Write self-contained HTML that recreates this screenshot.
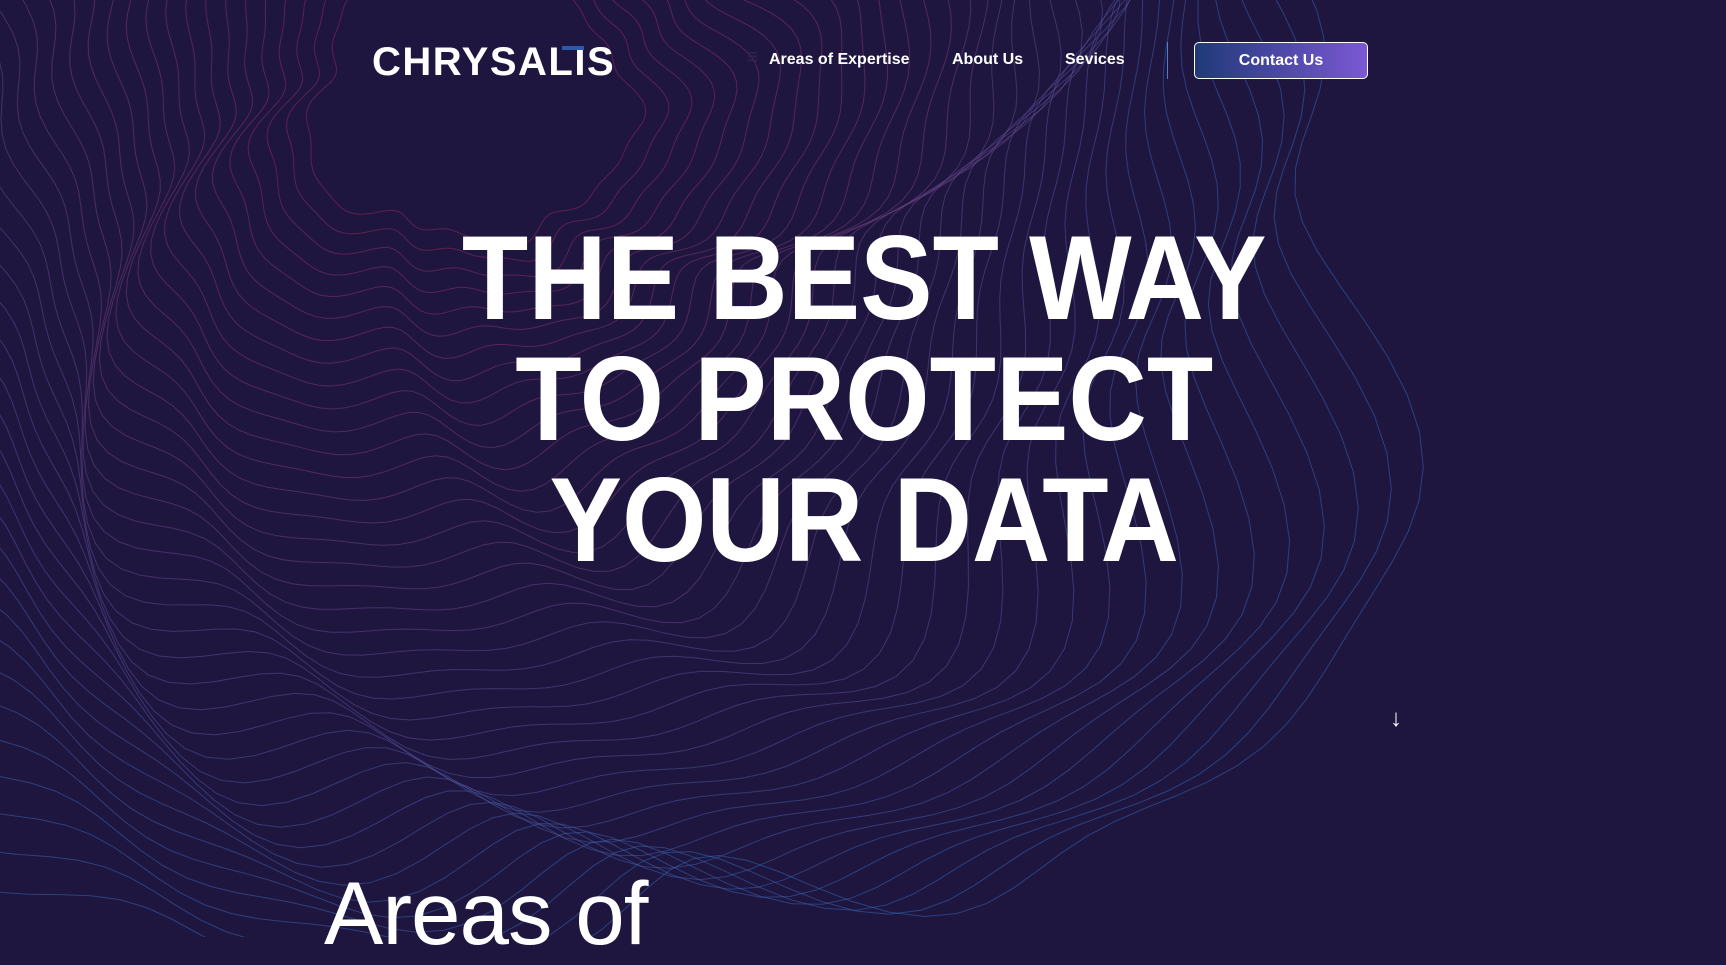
<!DOCTYPE html>
<html><head><meta charset="utf-8">
<style>
html,body{margin:0;padding:0;width:1726px;height:937px;overflow:hidden;background:#1f1640;font-family:"Liberation Sans",sans-serif;color:#fff}
svg#bg{position:absolute;left:0;top:0}
.logo{position:absolute;left:372px;top:40px;font-size:40px;font-weight:bold;letter-spacing:1.5px;color:#fff}
.logo .bar{position:absolute;left:190px;top:6px;width:22px;height:4px;background:#2a5aa8}
.nav{position:absolute;top:51px;font-size:16px;font-weight:bold;white-space:nowrap}
.div{position:absolute;left:1167px;top:42px;width:1px;height:37px;background:#4a7fd0}
.btn{position:absolute;left:1194px;top:42px;width:172px;height:35px;border:1.5px solid #fff;border-radius:5px;background:linear-gradient(90deg,#1f3a78,#7b58d4);font-size:16px;font-weight:bold;text-align:center;line-height:35px}
h1{position:absolute;left:0;width:1726px;top:218px;margin:0;text-align:center;font-size:120px;line-height:121px;font-weight:bold;letter-spacing:0;transform:scaleX(0.905);transform-origin:876px 0}
.arrow{position:absolute;left:1390px;top:705px;font-size:24px}
.areas{position:absolute;left:324px;top:862px;font-size:89px;font-weight:normal;letter-spacing:-1px}
</style></head><body>
<svg id="bg" width="1726" height="937" viewBox="0 0 1726 937"></svg>
<div class="logo">CHRYSALIS<span class="bar"></span></div>
<div class="nav" style="left:747px;top:50px;font-size:12px;color:#2c2450">☰</div>
<div class="nav" style="left:769px">Areas of Expertise</div>
<div class="nav" style="left:952px">About Us</div>
<div class="nav" style="left:1065px">Sevices</div>
<div class="div"></div>
<div class="btn">Contact Us</div>
<h1>THE BEST WAY<br>TO PROTECT<br>YOUR DATA</h1>
<div class="arrow">↓</div>
<div class="areas">Areas of</div>
<script>
(function(){
var s=document.getElementById('bg'),h='';
var cx=470,cy=90;
function lerp(a,b,t){return Math.round(a+(b-a)*t)}
for(var i=0;i<40;i++){
 var r=120+i*15,t=i/39;
 var c1=[160,40,95],c2=[50,110,190];
 var col='rgb('+lerp(c1[0],c2[0],t)+','+lerp(c1[1],c2[1],t)+','+lerp(c1[2],c2[2],t)+')';
 var d='';
 for(var k=0;k<=200;k++){
  var a=k/200*Math.PI*2;
  var n=1+0.08*Math.sin(3*a+i*0.15)+0.06*Math.sin(5*a+1+i*0.1)+0.03*Math.sin(11*a+i*0.4)+0.02*Math.sin(17*a+i*0.7);
  var x=cx+Math.cos(a)*r*1.3*n;
  var y=cy+Math.sin(a)*r*1.3*n;
  d+=(k?'L':'M')+x.toFixed(1)+' '+y.toFixed(1);
 }
 h+='<path d="'+d+'" fill="none" stroke="'+col+'" stroke-width="1" opacity="0.5"/>';
}
s.innerHTML=h;
})();
</script>
</body></html>
